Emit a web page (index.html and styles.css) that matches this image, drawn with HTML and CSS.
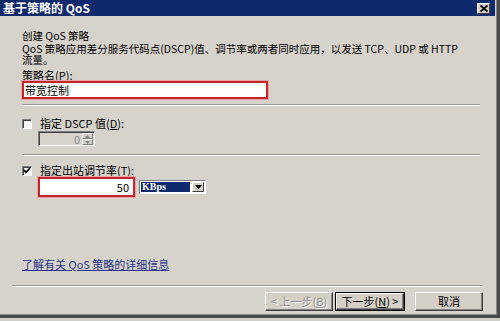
FILE: index.html
```html
<!DOCTYPE html>
<html lang="zh-CN">
<head>
<meta charset="utf-8">
<title>基于策略的 QoS</title>
<link rel="stylesheet" href="styles.css">
</head>
<body>
<div class="dialog">
  <div class="titlebar">
    <span class="title">基于策略的 QoS</span>
    <span class="close">
      <svg width="8" height="7" viewBox="0 0 8 7"><path d="M0.5 0.5 L7.5 6.5 M7.5 0.5 L0.5 6.5" stroke="#000" stroke-width="1.8" fill="none"/></svg>
    </span>
  </div>
  <div class="content">
    <div class="heading">创建 QoS 策略</div>
    <p class="desc">QoS 策略应用差分服务代码点(DSCP)值、调节率或两者同时应用，以发送 TCP、UDP 或 HTTP</p>
    <p class="desc">流量。</p>
    <div class="label">策略名(<u>P</u>):</div>
    <div class="textbox name-box mark">带宽控制</div>
    <div class="sep"></div>
    <div class="check-row">
      <span class="checkbox"></span>
      <span>指定 DSCP 值(<u>D</u>):</span>
    </div>
    <div class="spin">
      <span class="spin-val">0</span>
      <span class="spin-btns">
        <span class="spin-btn"><svg width="5" height="3" viewBox="0 0 5 3"><path d="M2.5 0 L5 3 L0 3 Z" fill="#808080"/></svg></span>
        <span class="spin-btn"><svg width="5" height="3" viewBox="0 0 5 3"><path d="M0 0 L5 0 L2.5 3 Z" fill="#808080"/></svg></span>
      </span>
    </div>
    <div class="sep sep2"></div>
    <div class="check-row check-row2">
      <span class="checkbox">
        <svg width="8" height="7" viewBox="0 0 8 7"><path d="M1 3 L3 5.3 L7 1" stroke="#000" stroke-width="1.8" fill="none"/></svg>
      </span>
      <span>指定出站调节率(<u>T</u>):</span>
    </div>
    <div class="rate-row">
      <div class="textbox rate-box mark">50</div>
      <div class="select">
        <span class="sel-val">KBps</span>
        <span class="sel-btn"><svg width="7" height="4" viewBox="0 0 7 4"><path d="M0 0 L7 0 L3.5 4 Z" fill="#000"/></svg></span>
      </div>
    </div>
    <a class="link" href="#">了解有关 QoS 策略的详细信息</a>
  </div>
  <div class="footer">
    <div class="sep footer-sep"></div>
    <div class="buttons">
      <span class="btn disabled">&lt; 上一步(<u>B</u>)</span>
      <span class="btn default"><span class="btn-in">下一步(<u>N</u>) &gt;</span></span>
      <span class="btn cancel">取消</span>
    </div>
  </div>
</div>
</body>
</html>
```

FILE: styles.css
```css
* {
  box-sizing: border-box;
  margin: 0;
  padding: 0;
}

html, body {
  width: 500px;
  height: 321px;
  overflow: hidden;
}

body {
  background: #cfcdc8;
  font-family: "Noto Sans CJK SC", sans-serif;
  font-size: 11px;
  color: #000;
}

.dialog {
  width: 500px;
  height: 318px;
  background: #d6d3cd;
  border-right: 3px solid #4a4a4a;
  border-bottom: 3px solid #4a4a4a;
  box-shadow: inset -1px -1px 0 #8a8a8a;
  display: flex;
  flex-direction: column;
}

.titlebar {
  height: 16px;
  margin-right: 2px;
  background: #0e2a6c;
  display: flex;
  align-items: center;
  justify-content: space-between;
  padding: 0 5px 0 3px;
}

.title {
  color: #fff;
  font-weight: bold;
  font-size: 12px;
  line-height: 16px;
}

.close {
  width: 13px;
  height: 11px;
  background: #d4d0c8;
  border: 1px solid;
  border-color: #fff #404040 #404040 #fff;
  display: flex;
  align-items: center;
  justify-content: center;
}

.content {
  padding: 14px 17px 0 22px;
  display: flex;
  flex-direction: column;
  align-items: flex-start;
}

.heading {
  line-height: 12px;
  font-size: 10.5px;
}

.desc {
  margin-top: 1px;
  line-height: 11px;
  font-size: 10.5px;
  white-space: nowrap;
}

.desc + .desc {
  margin-top: 0;
}

.label {
  margin-top: 5px;
  line-height: 11px;
}

.textbox {
  background: #fff;
  line-height: 14px;
  display: flex;
  align-items: center;
}

.mark {
  border: 2px solid #c2262c;
  box-shadow: 0 0 0 1px #eaa3a3;
}

.name-box {
  width: 246px;
  height: 18px;
  padding-left: 1px;
}

.sep {
  align-self: stretch;
  height: 2px;
  border-top: 1px solid #9c9a95;
  border-bottom: 1px solid #fff;
  margin-top: 5px;
}

.sep2 {
  margin-top: 8px;
}

.check-row {
  margin-top: 12px;
  line-height: 11px;
  display: flex;
  align-items: center;
  gap: 8px;
}

.check-row2 {
  margin-top: 9px;
}

.checkbox {
  width: 10px;
  height: 10px;
  background: #fff;
  border: 1px solid;
  border-color: #808080 #fff #fff #808080;
  box-shadow: inset 1px 1px 0 #404040;
  display: flex;
  align-items: center;
  justify-content: center;
}

.spin {
  margin-top: 2px;
  margin-left: 16px;
  width: 57px;
  height: 15px;
  background: #d6d3cd;
  border: 1px solid;
  border-color: #808080 #fff #fff #808080;
  box-shadow: inset 1px 1px 0 #404040;
  display: flex;
  align-items: center;
  justify-content: flex-end;
  padding: 1px 1px 0 0;
}

.spin-val {
  color: #8a8a8a;
  line-height: 11px;
  margin-right: 2px;
}

.spin-btns {
  display: flex;
  flex-direction: column;
  width: 11px;
  height: 12px;
}

.spin-btn {
  flex: 1;
  background: #d4d0c8;
  border: 1px solid;
  border-color: #fff #808080 #808080 #fff;
  display: flex;
  align-items: center;
  justify-content: center;
}

.rate-row {
  margin-top: 1px;
  margin-left: 16px;
  display: flex;
  align-items: center;
  gap: 4px;
}

.rate-box {
  width: 97px;
  height: 20px;
  justify-content: flex-end;
  padding-right: 4px;
}

.select {
  width: 67px;
  height: 14px;
  background: #fff;
  border: 1px solid;
  border-color: #808080 #fff #fff #808080;
  display: flex;
  align-items: stretch;
  padding: 1px;
}

.sel-val {
  flex: 1;
  background: #0e2a6c;
  color: #fff;
  font-family: "Liberation Serif", "Noto Sans CJK SC", serif;
  font-weight: bold;
  font-size: 10px;
  line-height: 10px;
  padding-left: 1px;
}

.sel-btn {
  width: 12px;
  margin-left: 2px;
  background: #d4d0c8;
  border: 1px solid;
  border-color: #fff #404040 #404040 #fff;
  display: flex;
  align-items: center;
  justify-content: center;
}

.link {
  margin-top: 62px;
  line-height: 11px;
  color: #2c3388;
  text-decoration: underline;
}

.footer {
  margin-top: auto;
  display: flex;
  flex-direction: column;
  padding-bottom: 4px;
}

.footer-sep {
  margin: 0 14px 0 12px;
}

.buttons {
  margin-top: 5px;
  display: flex;
  justify-content: flex-end;
  align-items: center;
  padding-right: 14px;
}

.btn {
  width: 68px;
  height: 19px;
  background: #d4d0c8;
  border: 1px solid;
  border-color: #fff #404040 #404040 #fff;
  box-shadow: inset -1px -1px 0 #808080;
  display: flex;
  align-items: center;
  justify-content: center;
  line-height: 11px;
}

.disabled {
  color: #8c8c8c;
  text-shadow: 1px 1px 0 #fff;
}

.default {
  width: 70px;
  margin-left: 2px;
  border: 1px solid #000;
  box-shadow: none;
  padding: 0;
}

.btn-in {
  width: 100%;
  height: 100%;
  border: 1px solid;
  border-color: #fff #404040 #404040 #fff;
  box-shadow: inset -1px -1px 0 #808080;
  display: flex;
  align-items: center;
  justify-content: center;
}

.cancel {
  margin-left: 10px;
}
```
